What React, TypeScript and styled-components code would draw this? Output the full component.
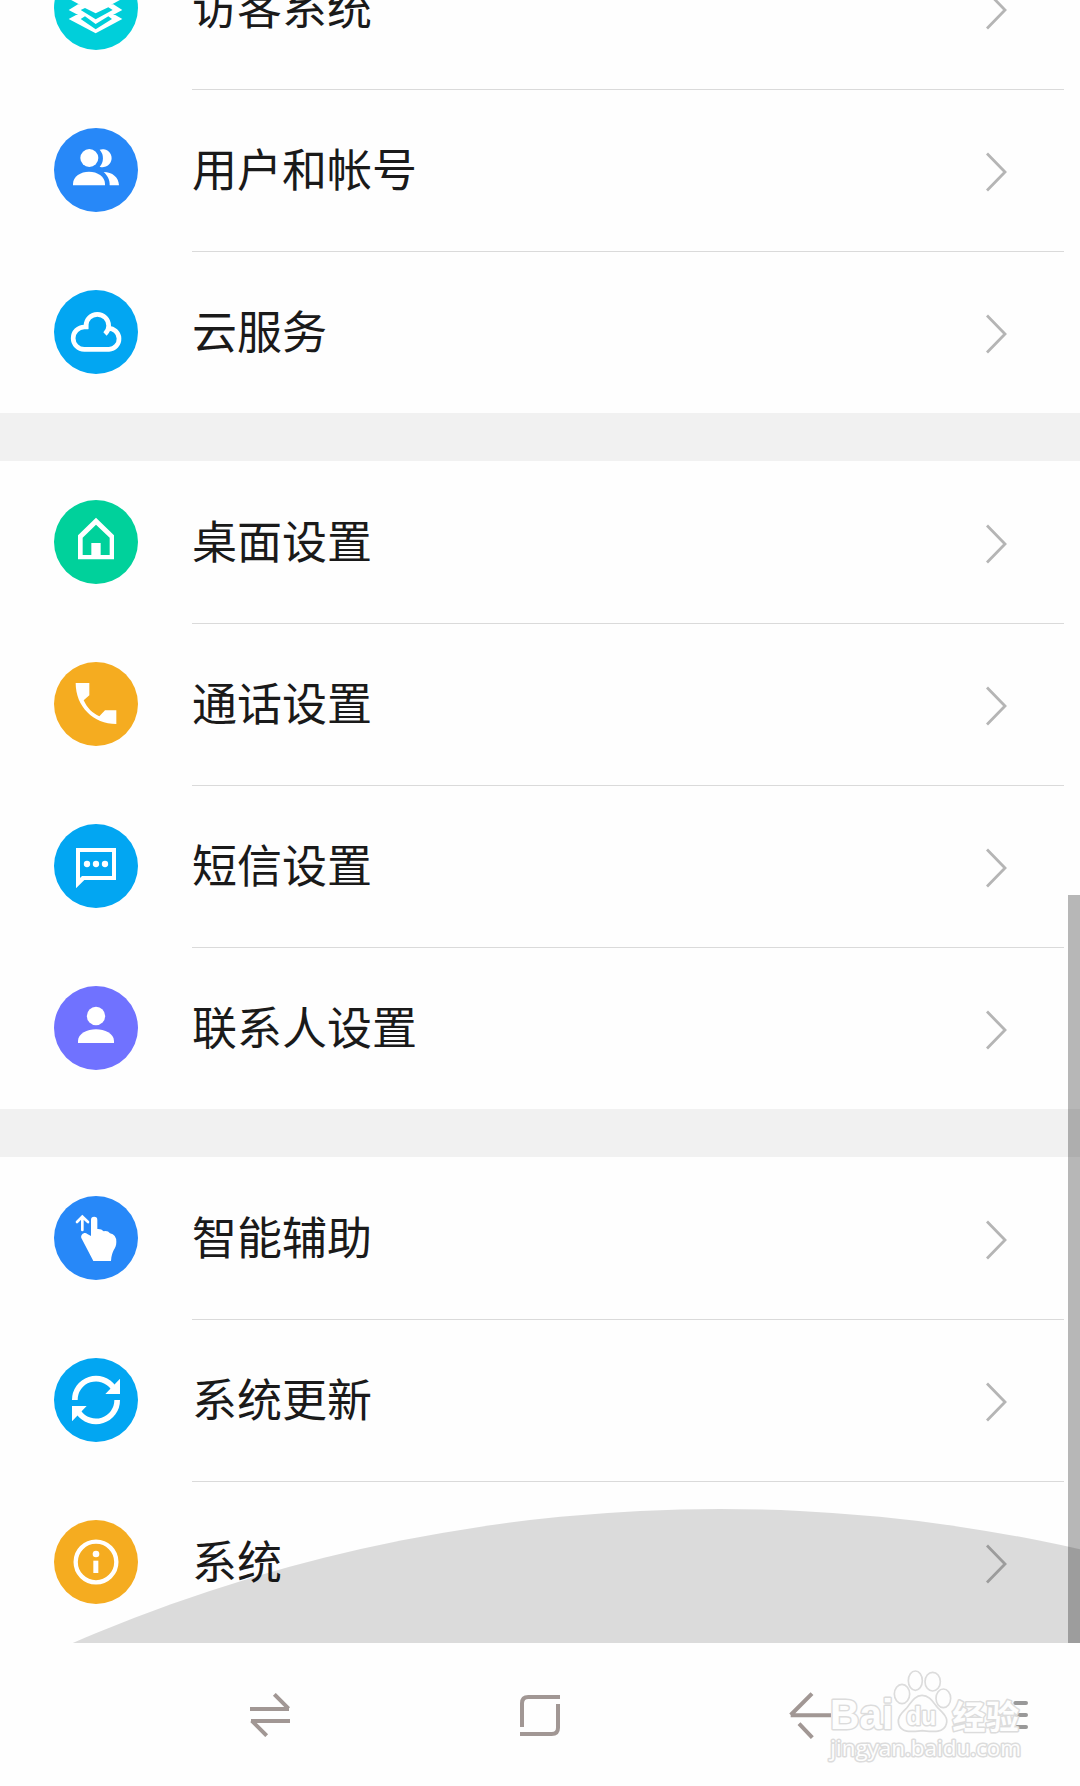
import React from 'react';
import styled, { createGlobalStyle } from 'styled-components';

const GlobalStyle = createGlobalStyle`
  body {
    margin: 0;
    background: #fefefe;
    font-family: 'Noto Sans CJK SC', sans-serif;
  }
`;

const Screen = styled.div`
  width: 1080px;
  height: 1786px;
  display: flex;
  flex-direction: column;
  overflow: hidden;
  background: #fefefe;
`;

const Viewport = styled.main`
  position: relative;
  height: 1643px;
  overflow: hidden;
`;

const List = styled.div`
  display: flex;
  flex-direction: column;
  gap: 48px;
  margin-top: -73px;
  background: #f1f1f1;
`;

const Group = styled.section`
  background: #fefefe;
`;

const Row = styled.div`
  display: flex;
  height: 162px;
  padding: 0 16px 0 54px;
  gap: 54px;
`;

const Badge = styled.div<{ $color: string }>`
  flex: none;
  align-self: center;
  width: 84px;
  height: 84px;
  border-radius: 50%;
  background: ${(p) => p.$color};
  svg {
    display: block;
    width: 84px;
    height: 84px;
  }
`;

const RowBody = styled.div<{ $line: boolean }>`
  flex: 1;
  display: flex;
  align-items: center;
  justify-content: space-between;
  box-sizing: border-box;
  padding-right: 56px;
  box-shadow: ${(p) => (p.$line ? 'inset 0 1px 0 #dadada' : 'none')};
`;

const Label = styled.span`
  font-size: 45px;
  line-height: 66px;
  padding-bottom: 4px;
  color: #1a1a1a;
`;

const Chevron = styled.svg`
  width: 22px;
  height: 40px;
  margin-top: 3px;
`;

const ScrollThumb = styled.div`
  position: absolute;
  right: 0;
  bottom: 0;
  width: 12px;
  height: 748px;
  background: rgba(13, 13, 13, 0.295);
`;

const EdgeGlow = styled.div`
  position: absolute;
  left: -910px;
  top: 1508.5px;
  width: 3260px;
  height: 3260px;
  border-radius: 50%;
  background: rgba(0, 0, 0, 0.138);
`;

const NavBar = styled.nav`
  position: relative;
  flex: 1;
  display: grid;
  grid-template-columns: repeat(3, 270px) 1fr;
  padding-left: 135px;
`;

const NavButton = styled.div`
  display: flex;
  align-items: center;
  justify-content: center;
  padding-top: 1px;
`;

const NavIcon = styled.svg<{ $w: number; $h: number }>`
  width: ${(p) => p.$w}px;
  height: ${(p) => p.$h}px;
  fill: none;
  stroke: #a19794;
  stroke-width: 12;
`;

const MenuIcon = styled(NavIcon)`
  stroke: #999;
  stroke-linecap: round;
`;

const Watermark = styled.svg`
  position: absolute;
  right: 40px;
  top: 17px;
  width: 220px;
  height: 110px;
  fill: #fefefe;
  stroke: #dcdcdc;
  stroke-width: 5;
  stroke-linejoin: round;
  text {
    paint-order: stroke;
    stroke-width: 9;
  }
`;

const icons: Record<string, React.ReactNode> = {
  layers: (
    <g fill="#fff">
      <path d="M44 159L66 147H184L205 159L125 202Z" />
      <path d="M44 132L72 115H178L205 132L125 175Z" />
      <path d="M44 98H205L125 142Z" />
      <path d="M80 132L93 126L125 142L163 124L176 132L125 160Z M80 159L93 151L125 174L163 151L174 159L125 190Z" fill="#00cfda" />
    </g>
  ),
  users: (
    <g fill="#fff">
      <circle cx="106" cy="90" r="27" />
      <path d="M137 65A27 27 0 1 1 137 116A38 38 0 0 0 137 65Z" />
      <path d="M57 172V168C57 145 80 131 105 131S153 145 153 168V172Z" />
      <path d="M149 132C175 132 194 148 195 172H167C168 155 160 142 149 132Z" />
    </g>
  ),
  cloud: (
    <g fill="none" stroke="#fff" strokeWidth="14">
      <path d="M103 111H91A33.5 33.5 0 0 0 91 178H165A31 31 0 0 0 162 115" />
      <path d="M96 117V107A34 34 0 0 1 164 107C164 118 160 125 153 132" />
    </g>
  ),
  home: (
    <path
      fill="#fff"
      fillRule="evenodd"
      d="M126 53L180 106V178H72V106ZM126 74L86 113V165H112V129H140V165H167V113Z"
    />
  ),
  phone: (
    <path
      fill="#fff"
      d="M65 63H106V100L89 115C100 139 116 154 136 163L153 145H187V186C118 186 65 134 65 63Z"
    />
  ),
  message: (
    <g fill="#fff">
      <path fillRule="evenodd" d="M66 72H186V168H91L66 193ZM78 84V162L84 156H174V84Z" />
      <circle cx="99" cy="120" r="9.5" />
      <circle cx="126" cy="120" r="9.5" />
      <circle cx="153" cy="120" r="9.5" />
    </g>
  ),
  person: (
    <g fill="#fff">
      <circle cx="126" cy="90" r="27.5" />
      <path d="M72 171V165C72 143 100 130 126 130S180 143 180 165V171Z" />
    </g>
  ),
  hand: (
    <g>
      <path
        fill="#fff"
        d="M111 120V72A9.5 9.5 0 0 1 130 72V99Q142 98 149 106Q161 103 168 112Q187 115 187 138C187 160 173 160 171 195H118L82 126C79 115 92 107 100 114Z"
      />
      <path d="M85 102V62M69 78L85 62L102 78" fill="none" stroke="#fff" strokeWidth="8" strokeLinecap="round" />
    </g>
  ),
  update: (
    <g>
      <path d="M62.500 126A63.500 63.500 0 0 1 178 89M189.500 126A63.500 63.500 0 0 1 74 163" fill="none" stroke="#fff" strokeWidth="17" />
      <path d="M198 62V108H154ZM54 190V144H98Z" fill="#fff" />
    </g>
  ),
  info: (
    <g fill="#fff">
      <circle cx="126" cy="126" r="61" fill="none" stroke="#fff" strokeWidth="13" />
      <circle cx="126" cy="102" r="10" />
      <rect x="118" y="122" width="15" height="37" />
    </g>
  ),
};

const groups = [
  [
    { label: '访客系统', color: '#00cfda', icon: 'layers' },
    { label: '用户和帐号', color: '#2788f8', icon: 'users' },
    { label: '云服务', color: '#02a6f2', icon: 'cloud' },
  ],
  [
    { label: '桌面设置', color: '#00d19b', icon: 'home' },
    { label: '通话设置', color: '#f5ac20', icon: 'phone' },
    { label: '短信设置', color: '#02a6f2', icon: 'message' },
    { label: '联系人设置', color: '#7072ff', icon: 'person' },
  ],
  [
    { label: '智能辅助', color: '#2788f8', icon: 'hand' },
    { label: '系统更新', color: '#02a6f2', icon: 'update' },
    { label: '系统', color: '#f5ac20', icon: 'info' },
  ],
];

export default function App() {
  return (
    <Screen>
      <GlobalStyle />
      <Viewport>
        <List>
          {groups.map((rows, g) => (
            <Group key={g}>
              {rows.map((row, i) => (
                <Row key={row.label}>
                  <Badge $color={row.color}>
                    <svg viewBox="0 0 252 252">{icons[row.icon]}</svg>
                  </Badge>
                  <RowBody $line={i > 0}>
                    <Label>{row.label}</Label>
                    <Chevron viewBox="0 0 22 40">
                      <path d="M1 1.500L19 20L1 38.500" fill="none" stroke="#b5b5b5" strokeWidth="2.800" />
                    </Chevron>
                  </RowBody>
                </Row>
              ))}
            </Group>
          ))}
        </List>
        <ScrollThumb />
        <EdgeGlow />
      </Viewport>
      <NavBar>
        <NavButton>
          <NavIcon $w={40} $h={44} viewBox="0 0 120 132">
            <path d="M0 48H117M73 4L116 47M3 84H120M5 83L50 128" />
          </NavIcon>
        </NavButton>
        <NavButton>
          <NavIcon $w={40} $h={41} viewBox="0 0 120 123">
            <path d="M6 96V25Q6 6 25 6H120M114 27V98Q114 117 95 117H0" />
          </NavIcon>
        </NavButton>
        <NavButton>
          <NavIcon $w={42} $h={47} viewBox="0 0 126 141">
            <path d="M5 70H126M69 5L5 69M30 95L70 137" />
          </NavIcon>
        </NavButton>
        <NavButton>
          <MenuIcon $w={30} $h={30} viewBox="0 0 90 90">
            <path d="M52 9H84M52 45H84M52 81H84" />
          </MenuIcon>
        </NavButton>
        <Watermark viewBox="0 0 660 330">
          <text x="30" y="208" fontFamily="Liberation Sans, sans-serif" fontWeight="700" fontSize="128" textLength="190" lengthAdjust="spacingAndGlyphs">Bai</text>
          <ellipse cx="246" cy="102" rx="23" ry="29" />
          <ellipse cx="286" cy="62" rx="21" ry="29" />
          <ellipse cx="338" cy="65" rx="23" ry="28" />
          <ellipse cx="370" cy="115" rx="22" ry="28" />
          <path d="M306 106C328 106 340 127 352 142C371 160 385 174 379 192C372 220 338 215 307 212C276 215 243 220 236 192C231 172 244 160 260 144C273 128 284 106 306 106Z" />
          <text x="259" y="196" fontFamily="Liberation Sans, sans-serif" fontWeight="700" fontSize="78" textLength="90" lengthAdjust="spacingAndGlyphs">du</text>
          <text x="397" y="206" fontFamily="Noto Sans CJK SC, sans-serif" fontWeight="700" fontSize="100" textLength="200">经验</text>
          <text x="31" y="288" fontFamily="Open Sans, sans-serif" fontSize="64" textLength="572" lengthAdjust="spacingAndGlyphs">jingyan.baidu.com</text>
        </Watermark>
      </NavBar>
    </Screen>
  );
}
